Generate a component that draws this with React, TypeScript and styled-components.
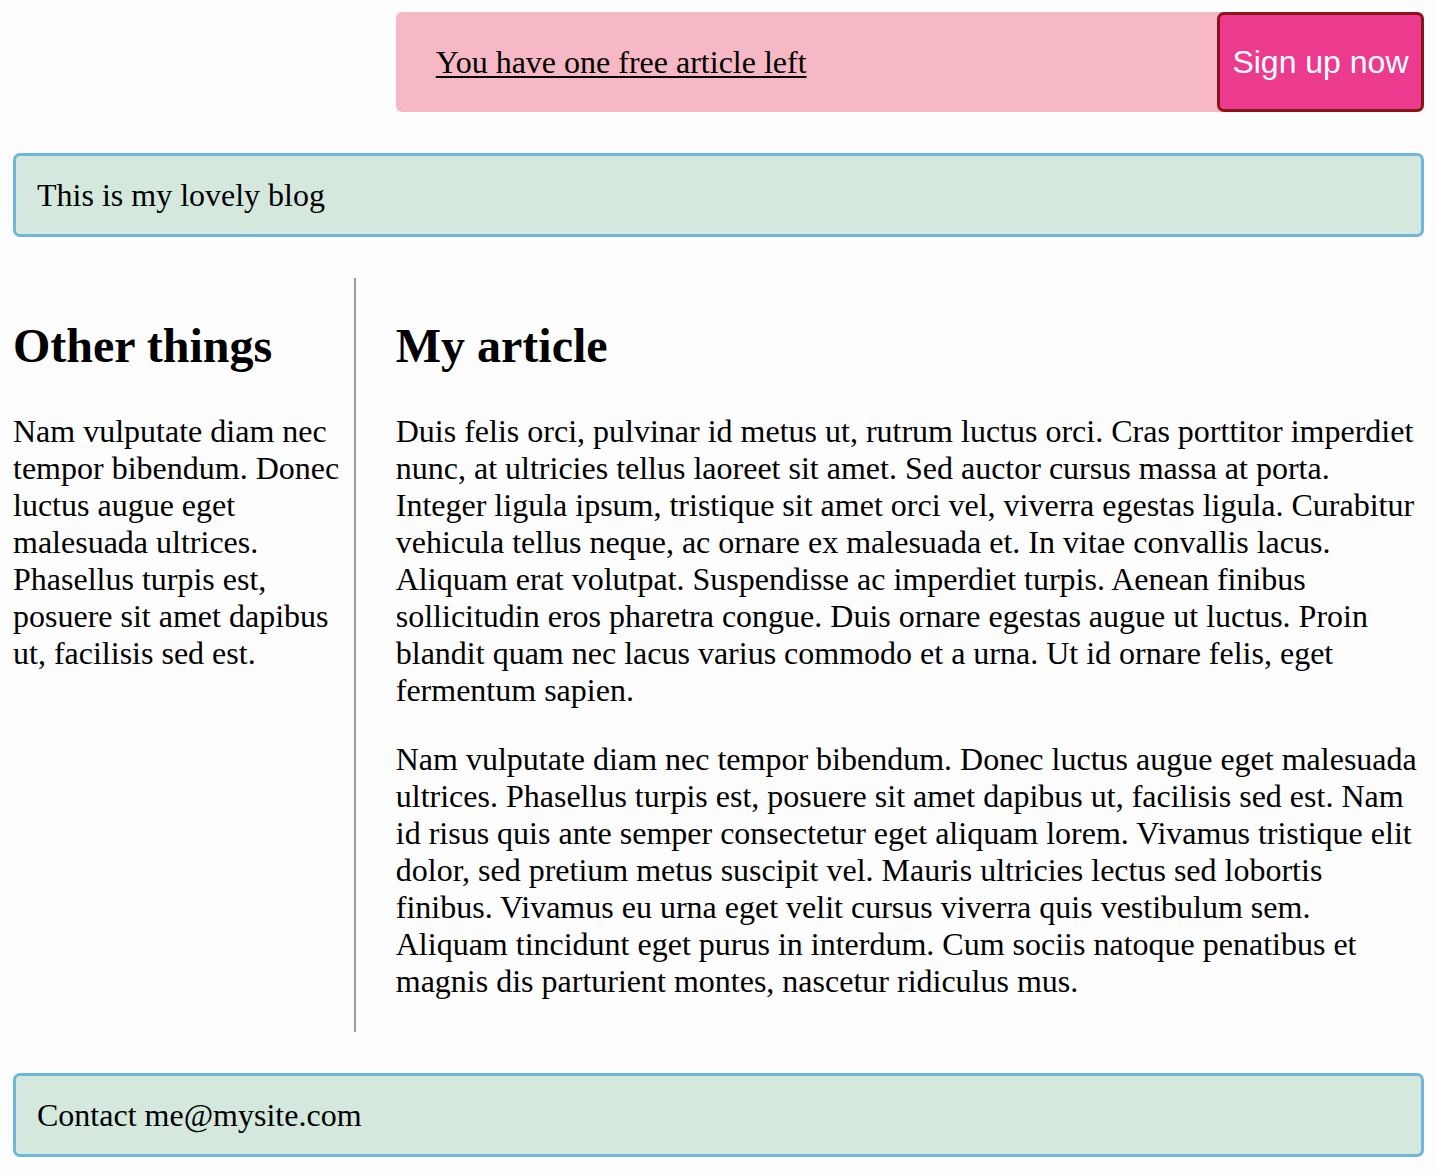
import React from "react";
import styled, { createGlobalStyle } from "styled-components";

const GlobalStyle = createGlobalStyle`
  html, body {
    margin: 0;
    padding: 0;
    background: #fdfdfd;
  }
  body {
    font-family: "Liberation Serif", "Times New Roman", serif;
    font-size: 32px;
    color: #000;
  }
`;

const Page = styled.div`
  display: grid;
  grid-template-columns: 1fr 3fr;
  column-gap: 40px;
  row-gap: 41px;
  padding: 12px 12px 17px 13px;
`;

const Banner = styled.aside`
  grid-column: 2;
  display: flex;
  align-items: stretch;
  justify-content: space-between;
  height: 100px;
  background: #f5b8c4;
  border-radius: 6px;
`;

const BannerLink = styled.a`
  display: flex;
  align-items: center;
  padding-left: 40px;
  color: #000;
  text-decoration: underline;
  text-decoration-thickness: 2px;
  text-underline-offset: 3px;
  font-size: 32px;
`;

const SignUp = styled.button`
  box-sizing: border-box;
  height: 100px;
  padding: 0 12.5px;
  background: #ec3a8f;
  color: #fff;
  border: 3px solid #8b1516;
  border-radius: 7px;
  font-family: "Liberation Sans", Helvetica, Arial, sans-serif;
  font-size: 32px;
  cursor: pointer;
`;

const Box = styled.div`
  grid-column: 1 / -1;
  background: #d4e8de;
  border: 3px solid #6cb7dc;
  border-radius: 7px;
  padding: 20.5px 21px;
  line-height: normal;
`;

const Sidebar = styled.nav`
  border-right: 2px solid #9c9c9c;
`;

const Article = styled.article``;

const Heading = styled.h2`
  font-size: 48px;
  font-weight: bold;
  margin: 40px 0;
`;

const Para = styled.p`
  margin: 32px 0;
`;

export default function App() {
  return (
    <>
      <GlobalStyle />
      <Page>
        <Banner>
          <BannerLink href="#">You have one free article left</BannerLink>
          <SignUp>Sign up now</SignUp>
        </Banner>
        <Box as="header">This is my lovely blog</Box>
        <Sidebar>
          <Heading>Other things</Heading>
          <Para>
            Nam vulputate diam nec tempor bibendum. Donec luctus augue eget
            malesuada ultrices. Phasellus turpis est, posuere sit amet dapibus
            ut, facilisis sed est.
          </Para>
        </Sidebar>
        <Article>
          <Heading>My article</Heading>
          <Para>
            Duis felis orci, pulvinar id metus ut, rutrum luctus orci. Cras
            porttitor imperdiet nunc, at ultricies tellus laoreet sit amet. Sed
            auctor cursus massa at porta. Integer ligula ipsum, tristique sit
            amet orci vel, viverra egestas ligula. Curabitur vehicula tellus
            neque, ac ornare ex malesuada et. In vitae convallis lacus. Aliquam
            erat volutpat. Suspendisse ac imperdiet turpis. Aenean finibus
            sollicitudin eros pharetra congue. Duis ornare egestas augue ut
            luctus. Proin blandit quam nec lacus varius commodo et a urna. Ut id
            ornare felis, eget fermentum sapien.
          </Para>
          <Para>
            Nam vulputate diam nec tempor bibendum. Donec luctus augue eget
            malesuada ultrices. Phasellus turpis est, posuere sit amet dapibus
            ut, facilisis sed est. Nam id risus quis ante semper consectetur
            eget aliquam lorem. Vivamus tristique elit dolor, sed pretium metus
            suscipit vel. Mauris ultricies lectus sed lobortis finibus. Vivamus
            eu urna eget velit cursus viverra quis vestibulum sem. Aliquam
            tincidunt eget purus in interdum. Cum sociis natoque penatibus et
            magnis dis parturient montes, nascetur ridiculus mus.
          </Para>
        </Article>
        <Box as="footer">Contact me@mysite.com</Box>
      </Page>
    </>
  );
}
